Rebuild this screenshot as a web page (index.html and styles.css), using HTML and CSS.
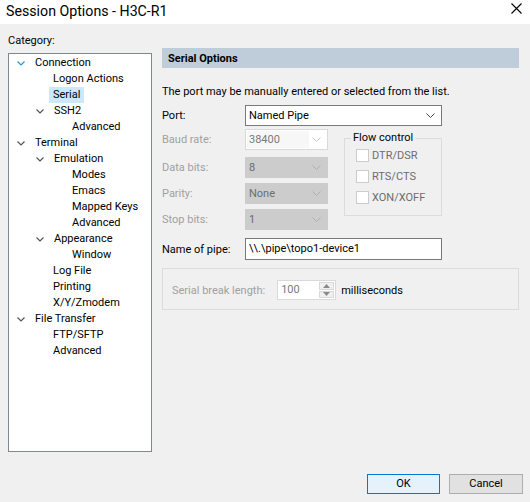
FILE: index.html
```html
<!DOCTYPE html>
<html>
<head>
<meta charset="utf-8">
<link rel="stylesheet" href="styles.css">
</head>
<body>
<div class="window">
  <div class="titlebar">
    <span class="title">Session Options - H3C-R1</span>
    <svg class="close" width="11" height="11" viewBox="0 0 11 11"><path d="M0.5 0.5 L10.5 10.5 M10.5 0.5 L0.5 10.5" stroke="#000" stroke-width="1.1" fill="none"/></svg>
  </div>
  <div class="main">
    <div class="left">
      <div class="cat-label">Category:</div>
      <div class="tree">
        <div class="node l0"><svg class="chev blue" width="8" height="5" viewBox="0 0 8 5"><polyline points="0.5,0.5 4,4 7.5,0.5" fill="none" stroke="#1c9ad6" stroke-width="1.2"/></svg><span>Connection</span></div>
        <div class="node l1"><span>Logon Actions</span></div>
        <div class="node l1"><span class="sel">Serial</span></div>
        <div class="node l1"><svg class="chev" width="8" height="5" viewBox="0 0 8 5"><polyline points="0.5,0.5 4,4 7.5,0.5" fill="none" stroke="#555" stroke-width="1.2"/></svg><span>SSH2</span></div>
        <div class="node l2"><span>Advanced</span></div>
        <div class="node l0"><svg class="chev" width="8" height="5" viewBox="0 0 8 5"><polyline points="0.5,0.5 4,4 7.5,0.5" fill="none" stroke="#555" stroke-width="1.2"/></svg><span>Terminal</span></div>
        <div class="node l1"><svg class="chev" width="8" height="5" viewBox="0 0 8 5"><polyline points="0.5,0.5 4,4 7.5,0.5" fill="none" stroke="#555" stroke-width="1.2"/></svg><span>Emulation</span></div>
        <div class="node l2"><span>Modes</span></div>
        <div class="node l2"><span>Emacs</span></div>
        <div class="node l2"><span>Mapped Keys</span></div>
        <div class="node l2"><span>Advanced</span></div>
        <div class="node l1"><svg class="chev" width="8" height="5" viewBox="0 0 8 5"><polyline points="0.5,0.5 4,4 7.5,0.5" fill="none" stroke="#555" stroke-width="1.2"/></svg><span>Appearance</span></div>
        <div class="node l2"><span>Window</span></div>
        <div class="node l1"><span>Log File</span></div>
        <div class="node l1"><span>Printing</span></div>
        <div class="node l1"><span>X/Y/Zmodem</span></div>
        <div class="node l0"><svg class="chev" width="8" height="5" viewBox="0 0 8 5"><polyline points="0.5,0.5 4,4 7.5,0.5" fill="none" stroke="#555" stroke-width="1.2"/></svg><span>File Transfer</span></div>
        <div class="node l1"><span>FTP/SFTP</span></div>
        <div class="node l1"><span>Advanced</span></div>
      </div>
    </div>
    <div class="panel">
      <div class="header">Serial Options</div>
      <div class="desc">The port may be manually entered or selected from the list.</div>
      <div class="row port-row">
        <label class="lbl">Port:</label>
        <div class="combo combo-port"><span>Named Pipe</span><svg width="9" height="5" viewBox="0 0 9 5"><polyline points="0.5,0.5 4.5,4.5 8.5,0.5" fill="none" stroke="#444" stroke-width="1"/></svg></div>
      </div>
      <div class="settings">
        <div class="fields">
          <div class="row r-baud">
            <label class="lbl dis">Baud rate:</label>
            <div class="combo combo-baud"><span class="val">38400</span><svg width="9" height="5" viewBox="0 0 9 5"><polyline points="0.5,0.5 4.5,4.5 8.5,0.5" fill="none" stroke="#c4c4c4" stroke-width="1"/></svg></div>
          </div>
          <div class="row r-data">
            <label class="lbl dis">Data bits:</label>
            <div class="combo combo-dis"><span>8</span><svg width="9" height="5" viewBox="0 0 9 5"><polyline points="0.5,0.5 4.5,4.5 8.5,0.5" fill="none" stroke="#b0b0b0" stroke-width="1"/></svg></div>
          </div>
          <div class="row r-par">
            <label class="lbl dis">Parity:</label>
            <div class="combo combo-dis"><span>None</span><svg width="9" height="5" viewBox="0 0 9 5"><polyline points="0.5,0.5 4.5,4.5 8.5,0.5" fill="none" stroke="#b0b0b0" stroke-width="1"/></svg></div>
          </div>
          <div class="row r-stop">
            <label class="lbl dis">Stop bits:</label>
            <div class="combo combo-dis"><span>1</span><svg width="9" height="5" viewBox="0 0 9 5"><polyline points="0.5,0.5 4.5,4.5 8.5,0.5" fill="none" stroke="#b0b0b0" stroke-width="1"/></svg></div>
          </div>
        </div>
        <fieldset class="flow">
          <legend>Flow control</legend>
          <div class="chk"><span class="box"></span>DTR/DSR</div>
          <div class="chk"><span class="box"></span>RTS/CTS</div>
          <div class="chk"><span class="box"></span>XON/XOFF</div>
        </fieldset>
      </div>
      <div class="row pipe-row">
        <label class="lbl">Name of pipe:</label>
        <div class="textbox">\\.\pipe\topo1-device1</div>
      </div>
      <div class="break-group">
        <span class="dis">Serial break length:</span>
        <div class="spin">
          <span class="spin-val">100</span>
          <div class="spin-btns">
            <div class="sb"><svg width="7" height="4" viewBox="0 0 7 4"><polygon points="0,4 3.5,0 7,4" fill="#8a8a8a"/></svg></div>
            <div class="sb"><svg width="7" height="4" viewBox="0 0 7 4"><polygon points="0,0 3.5,4 7,0" fill="#8a8a8a"/></svg></div>
          </div>
        </div>
        <span class="ms">milliseconds</span>
      </div>
    </div>
  </div>
  <div class="footer">
    <div class="btn ok">OK</div>
    <div class="btn cancel">Cancel</div>
  </div>
</div>
</body>
</html>
```

FILE: styles.css
```css
* { box-sizing: border-box; }
html, body { margin: 0; padding: 0; }
body {
  width: 530px;
  height: 502px;
  overflow: hidden;
  font-family: Roboto, "Liberation Sans", sans-serif;
  font-size: 11px;
  color: #000;
  background: #f0f0f0;
}
.window {
  width: 530px;
  height: 502px;
  display: flex;
  flex-direction: column;
  background: #f0f0f0;
}
.titlebar {
  height: 24px;
  background: #fff;
  display: flex;
  align-items: center;
  justify-content: space-between;
  padding: 0 6px 2px 6px;
}
.title {
  font-size: 14.2px;
  line-height: 20px;
  color: #000;
}
.close { margin-right: 2px; margin-top: -6px; }
.main {
  display: flex;
  padding: 0 11px 0 8px;
  gap: 10px;
  height: 438px;
}
.left {
  width: 144px;
  padding-top: 8px;
}
.cat-label {
  height: 16px;
  line-height: 16px;
  padding-top: 1px;
}
.tree {
  margin-top: 5px;
  height: 399px;
  border: 1px solid #828790;
  background: #fff;
  padding-top: 1px;
}
.node {
  height: 16px;
  line-height: 16px;
  display: flex;
  align-items: center;
  white-space: nowrap;
}
.node .chev { margin-right: 10px; flex: none; }
.node.l0 { padding-left: 8px; }
.node.l1 { padding-left: 27px; }
.node.l2 { padding-left: 46px; }
.node.l0 span:only-child { margin-left: 18px; }
.node.l1 span:only-child { margin-left: 17px; }
.node.l2 span:only-child { margin-left: 17px; }
.node .sel {
  background: #cce8ff;
  padding: 0 4px 0 4px;
  margin-left: 13px !important;
}
.panel {
  width: 357px;
  padding-top: 24px;
}
.header {
  height: 20px;
  line-height: 21px;
  background: #bfcddb;
  font-weight: bold;
  padding-left: 6px;
}
.desc {
  margin-top: 16px;
  height: 16px;
  line-height: 16px;
}
.row {
  display: flex;
  align-items: center;
}
.lbl {
  width: 83px;
  flex: none;
}
.dis { color: #a0a0a0; }
.port-row { margin-top: 5px; height: 21px; }
.combo {
  height: 21px;
  display: flex;
  align-items: center;
  justify-content: space-between;
  padding: 0 6px 0 3px;
  border: 1px solid #7a7a7a;
  background: #fff;
}
.combo-port { width: 197px; }
.combo-baud {
  width: 83px;
  border-color: #d9d9d9;
  color: #7a7a7a;
  padding-left: 1px;
}
.combo-baud .val {
  background: #f7f7f7;
  width: 62px;
  height: 17px;
  line-height: 17px;
  padding-left: 2px;
}
.combo-dis {
  width: 83px;
  border-color: #cccccc;
  background: #cccccc;
  color: #6d6d6d;
}
.settings {
  display: flex;
  height: 108px;
}
.fields { width: 182px; }
.r-baud { margin-top: 3px; height: 21px; }
.r-data { margin-top: 7px; height: 21px; }
.r-par { margin-top: 5px; height: 21px; }
.r-stop { margin-top: 5px; height: 21px; }
.flow {
  margin: 5px 0 0 0;
  padding: 0 0 0 11px;
  width: 98px;
  height: 85px;
  border: 1px solid #dcdcdc;
  min-inline-size: 0;
}
.flow legend {
  padding: 0 2px;
  margin-left: -5px;
  line-height: 14px;
  color: #000;
}
.chk {
  display: flex;
  align-items: center;
  height: 16px;
  color: #6d6d6d;
  margin-top: 3px;
  margin-bottom: 5px;
}
.chk:first-of-type { margin-top: 2px; }
.box {
  width: 13px;
  height: 13px;
  border: 1px solid #cccccc;
  background: #fff;
  margin-right: 3px;
  flex: none;
}
.pipe-row { margin-top: 4px; height: 22px; }
.textbox {
  width: 197px;
  height: 22px;
  border: 1px solid #7a7a7a;
  background: #fff;
  line-height: 20px;
  padding-left: 3px;
}
.break-group {
  margin-top: 8px;
  height: 42px;
  border: 1px solid #dcdcdc;
  display: flex;
  align-items: center;
  padding-left: 9px;
  padding-top: 2px;
}
.spin {
  margin-left: 12px;
  width: 59px;
  height: 20px;
  border: 1px solid #d9d9d9;
  background: #fff;
  display: flex;
  justify-content: space-between;
}
.spin-val {
  color: #7a7a7a;
  line-height: 18px;
  padding-left: 3px;
}
.spin-btns {
  width: 16px;
  display: flex;
  flex-direction: column;
  gap: 1px;
  padding: 1px 1px 1px 0;
}
.sb {
  flex: 1;
  background: #f0f0f0;
  border: 1px solid #d9d9d9;
  display: flex;
  align-items: center;
  justify-content: center;
}
.ms { margin-left: 5px; }
.footer {
  display: flex;
  justify-content: flex-end;
  gap: 9px;
  padding: 12px 7px 0 0;
}
.btn {
  height: 20px;
  line-height: 18px;
  text-align: center;
}
.ok {
  width: 73px;
  border: 1px solid #0078d7;
  background: #e5f1fb;
}
.cancel {
  width: 74px;
  border: 1px solid #adadad;
  background: #e1e1e1;
}
```
